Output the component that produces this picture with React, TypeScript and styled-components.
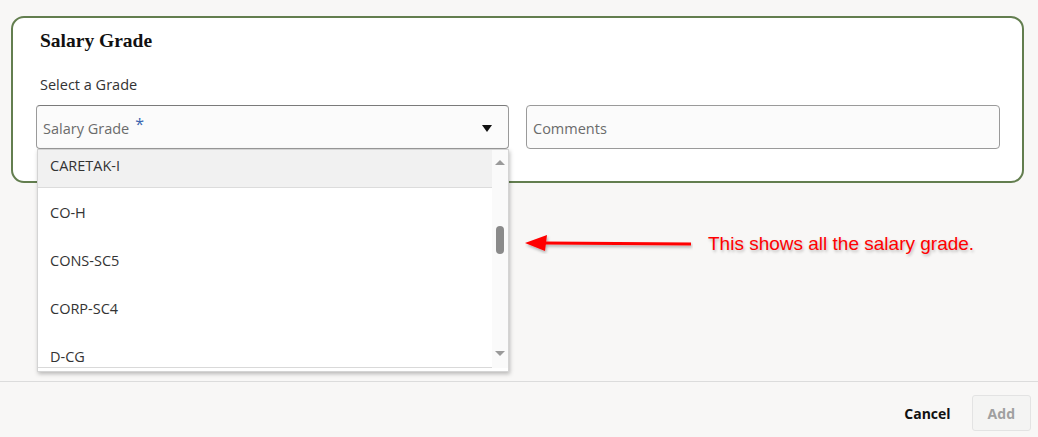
import styled, { createGlobalStyle } from "styled-components";

const GlobalStyle = createGlobalStyle`
  html, body {
    margin: 0;
    padding: 0;
    background: #f8f7f6;
  }
  * {
    box-sizing: border-box;
  }
`;

const Page = styled.div`
  position: relative;
  width: 1038px;
  height: 437px;
  display: flex;
  flex-direction: column;
  font-family: "Open Sans", "Noto Sans", sans-serif;
  color: #2f2f2f;
`;

const Main = styled.div`
  flex: 1;
  padding: 16px 14px 0 11px;
`;

const Card = styled.section`
  height: 167px;
  background: #ffffff;
  border: 2px solid #637e4f;
  border-radius: 13px;
  padding: 13px 22px 0 23px;
`;

const Title = styled.h2`
  margin: 0 0 0 4px;
  font-family: "Liberation Serif", serif;
  font-size: 19.5px;
  line-height: 20px;
  font-weight: 700;
  color: #111;
`;

const Label = styled.div`
  margin: 24px 0 10px 4px;
  font-size: 14.5px;
  line-height: 20px;
  color: #333;
`;

const Fields = styled.div`
  display: grid;
  grid-template-columns: 473px 474px;
  gap: 17px;
`;

const SelectWrap = styled.div`
  position: relative;
`;

const Field = styled.div<{ $strong?: boolean }>`
  height: 44px;
  display: flex;
  align-items: center;
  padding: 2px 6px 0 6px;
  background: #fbfbfb;
  border: 1px solid #9a9a9a;
  border-top-color: ${(p) => (p.$strong ? "#7a7a7a" : "#9a9a9a")};
  border-radius: 4px;
  font-size: 14.5px;
  color: #6b6b6b;
`;

const Placeholder = styled.span`
  flex: 1;
`;

const Required = styled.span`
  color: #3a66b0;
  font-size: 16px;
  margin-left: 6px;
  position: relative;
  top: -4px;
`;

const Caret = styled.span`
  width: 0;
  height: 0;
  margin-right: 10px;
  border-left: 5.5px solid transparent;
  border-right: 5.5px solid transparent;
  border-top: 7px solid #111;
`;

const Dropdown = styled.div`
  position: absolute;
  top: 44px;
  left: 1px;
  width: 472px;
  height: 223px;
  background: #fff;
  border: 1px solid #d4d4d4;
  box-shadow: 1px 2px 4px rgba(0, 0, 0, 0.25);
  display: flex;
  padding-bottom: 3px;
  z-index: 2;
`;

const List = styled.ul`
  flex: 1;
  list-style: none;
  margin: 0;
  padding: 0;
  overflow: hidden;
  border-bottom: 1px solid #d9d9d9;
`;

const Item = styled.li<{ $active?: boolean }>`
  height: 48px;
  display: flex;
  align-items: center;
  padding: 1px 0 0 12px;
  font-size: 14.5px;
  color: #333;
  background: ${(p) => (p.$active ? "#f1f1f1" : "transparent")};
  border-bottom: 1px solid ${(p) => (p.$active ? "#dcdcdc" : "transparent")};
  &:first-child {
    margin-top: -10px;
    padding-top: 3px;
  }
`;

const Scrollbar = styled.div`
  width: 16px;
  background: #fafafa;
  display: flex;
  flex-direction: column;
  align-items: center;
  justify-content: space-between;
  padding: 10px 0 12px;
`;

const ScrollArrow = styled.span<{ $up?: boolean }>`
  width: 0;
  height: 0;
  border-left: 5px solid transparent;
  border-right: 5px solid transparent;
  ${(p) => (p.$up ? "border-bottom: 5px solid #9a9a9a;" : "border-top: 5px solid #9a9a9a;")}
`;

const Track = styled.div`
  flex: 1;
  width: 8px;
  padding-top: 61px;
`;

const Thumb = styled.div`
  width: 8px;
  height: 28px;
  border-radius: 4px;
  background: #8a8a8a;
`;

const Annotation = styled.div`
  position: absolute;
  left: 525px;
  top: 233px;
  display: flex;
  align-items: center;
  gap: 15px;
`;

const Note = styled.span`
  font-family: "Liberation Sans", Arial, sans-serif;
  font-size: 19px;
  color: #ff0000;
  text-shadow: 1px 2px 3px rgba(0, 0, 0, 0.25);
`;

const Footer = styled.footer`
  height: 56px;
  border-top: 1px solid #dcdcdc;
  display: flex;
  justify-content: flex-end;
  align-items: flex-start;
  gap: 5px;
  padding: 13px 7px 0 0;
`;

const Button = styled.button<{ $disabled?: boolean }>`
  height: 36px;
  padding: 0 15px;
  font-family: "Open Sans", "Noto Sans", sans-serif;
  font-size: 14px;
  font-weight: 700;
  border-radius: 3px;
  border: 1px solid ${(p) => (p.$disabled ? "#e3e3e3" : "transparent")};
  background: ${(p) => (p.$disabled ? "#f4f4f3" : "transparent")};
  color: ${(p) => (p.$disabled ? "#a0a0a0" : "#111")};
  cursor: pointer;
`;

const grades = ["CARETAK-I", "CO-H", "CONS-SC5", "CORP-SC4", "D-CG"];

export default function App() {
  return (
    <Page>
      <GlobalStyle />
      <Main>
        <Card>
          <Title>Salary Grade</Title>
          <Label>Select a Grade</Label>
          <Fields>
            <SelectWrap>
              <Field $strong>
                <Placeholder>
                  Salary Grade<Required>*</Required>
                </Placeholder>
                <Caret />
              </Field>
              <Dropdown>
                <List>
                  {grades.map((g, i) => (
                    <Item key={g} $active={i === 0}>
                      {g}
                    </Item>
                  ))}
                </List>
                <Scrollbar>
                  <ScrollArrow $up />
                  <Track>
                    <Thumb />
                  </Track>
                  <ScrollArrow />
                </Scrollbar>
              </Dropdown>
            </SelectWrap>
            <Field>Comments</Field>
          </Fields>
        </Card>
      </Main>
      <Footer>
        <Button>Cancel</Button>
        <Button $disabled>Add</Button>
      </Footer>
      <Annotation>
        <svg width="168" height="20" viewBox="0 0 168 20">
          <defs>
            <filter id="sh" x="-10%" y="-50%" width="120%" height="200%">
              <feDropShadow dx="1" dy="2" stdDeviation="1.5" floodOpacity="0.3" />
            </filter>
          </defs>
          <g filter="url(#sh)">
            <line x1="18" y1="9" x2="166" y2="10" stroke="#ff0000" strokeWidth="3" />
            <polygon points="0,9 22,1 20,17" fill="#ff0000" />
          </g>
        </svg>
        <Note>This shows all the salary grade.</Note>
      </Annotation>
    </Page>
  );
}
